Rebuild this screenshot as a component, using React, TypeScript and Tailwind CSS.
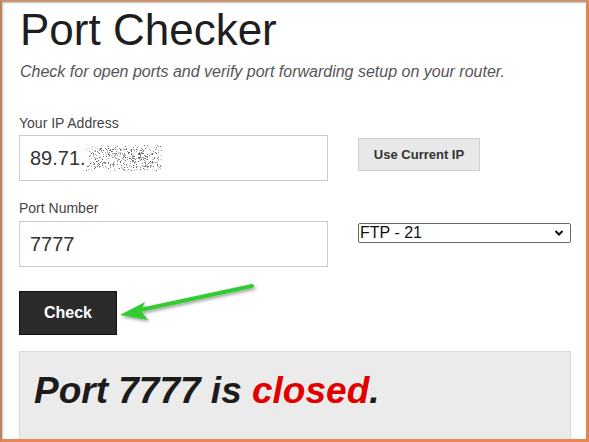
import React from "react";

function Noise() {
  const dots: React.ReactElement[] = [];
  let seed = 12345;
  const rnd = () => {
    seed = (seed * 1103515245 + 12345) & 0x7fffffff;
    return seed / 0x7fffffff;
  };
  for (let y = 0; y < 26; y++) {
    for (let x = 0; x < 76; x++) {
      const r = rnd();
      const edge = Math.min(x, 75 - x, y, 25 - y);
      const p = edge < 3 ? 0.1 : 0.24;
      if (r < p) {
        const g = Math.floor(90 + rnd() * 110);
        dots.push(
          <rect key={`${x}-${y}`} x={x} y={y} width={1} height={1} fill={`rgb(${g},${g},${g})`} />
        );
      }
    }
  }
  return (
    <svg width="76" height="26" viewBox="0 0 76 26" className="block">
      {dots}
    </svg>
  );
}

export default function App() {
  return (
    <div
      className="relative w-[589px] h-[442px] overflow-hidden bg-white border-t-2 border-l-2 border-r-[3px] border-b-[3px] border-t-[#c99570] border-l-[#b9875f] border-r-[#e8854c] border-b-[#e8874f] shadow-[inset_1px_1px_2px_rgba(0,0,0,0.25)]"
      style={{ fontFamily: '"Liberation Sans", Arial, sans-serif' }}
    >
      <div className="pl-[17px] pr-[15px] pt-[4px]">
        <h1 className="text-[44px] leading-[48px] text-[#1e1e1e] pl-[1px]">Port Checker</h1>
        <p className="mt-[8px] text-[16px] leading-[20px] italic text-[#555] pl-[1px]">
          Check for open ports and verify port forwarding setup on your router.
        </p>

        <div className="mt-[33px] text-[14px] leading-[16px] text-[#444]">Your IP Address</div>
        <div className="mt-[4px] flex items-start gap-[30px]">
          <div className="w-[309px] h-[46px] border border-[#cccccc] bg-white flex items-center pl-[10px]">
            <span className="text-[20px] text-[#333]">89.71.</span>
            <Noise />
          </div>
          <button className="mt-[3px] w-[122px] h-[33px] bg-[#e8e8e8] border border-[#d0d0d0] text-[13px] font-bold text-[#333]">
            Use Current IP
          </button>
        </div>

        <div className="mt-[19px] text-[14px] leading-[16px] text-[#444]">Port Number</div>
        <div className="mt-[5px] flex items-start gap-[30px]">
          <div className="w-[309px] h-[46px] border border-[#cccccc] bg-white flex items-center pl-[10px]">
            <span className="text-[20px] text-[#333]">7777</span>
          </div>
          <div className="relative mt-[2px] w-[213px] h-[20px] border border-[#666] rounded-[2px] bg-white flex items-center pl-[1px]">
            <span className="text-[16px] leading-[18px] text-[#111]">FTP - 21</span>
            <svg
              className="absolute right-[6px] top-[5px]"
              width="10"
              height="8"
              viewBox="0 0 10 8"
            >
              <path d="M1.5 2 L5 5.5 L8.5 2" fill="none" stroke="#111" strokeWidth="2" />
            </svg>
          </div>
        </div>

        <button className="mt-[24px] w-[98px] h-[44px] bg-[#2b2b2b] border border-[#111] text-white font-bold text-[16px]">
          Check
        </button>

        <div className="mt-[16px] h-[100px] bg-[#ebebeb] border border-[#d8d8d8] pl-[14px] pt-[17px]">
          <div className="text-[37px] leading-[44px] font-bold italic text-[#1c1c1c]">
            Port 7777 is <span className="text-[#e00000]">closed</span>.
          </div>
        </div>
      </div>

      <svg className="absolute left-0 top-0 pointer-events-none" width="589" height="442">
        <defs>
          <filter id="sh" x="-20%" y="-50%" width="140%" height="200%">
            <feDropShadow dx="1.5" dy="2" stdDeviation="1.5" floodColor="#000" floodOpacity="0.35" />
          </filter>
        </defs>
        <g filter="url(#sh)">
          <path d="M250 284 L138 308" stroke="#33cc33" strokeWidth="4" strokeLinecap="round" />
          <path d="M118 313 L143 300 L139 309 L146 318 Z" fill="#33cc33" />
        </g>
      </svg>
    </div>
  );
}
